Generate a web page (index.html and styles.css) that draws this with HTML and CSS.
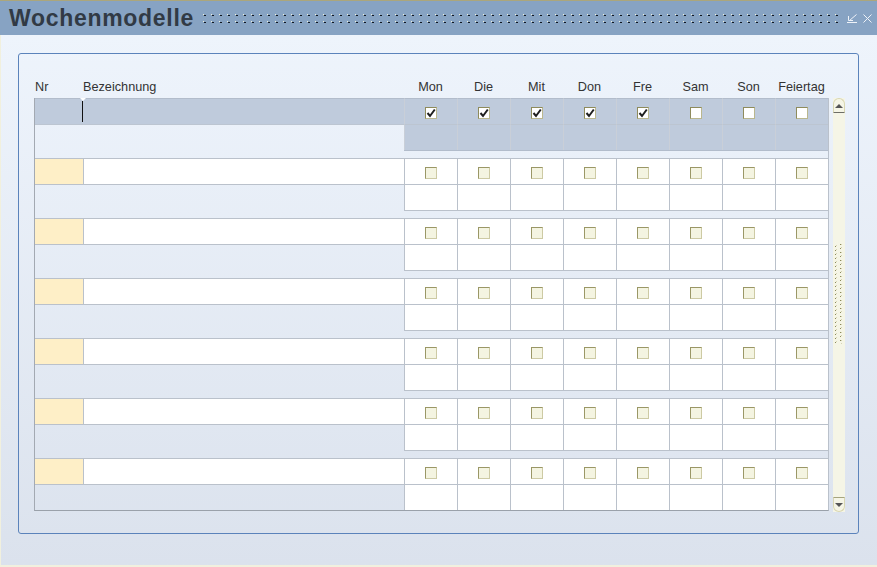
FILE: index.html
```html
<!DOCTYPE html>
<html lang="de">
    <head>
        <meta charset="UTF-8">
        <meta name="viewport" content="width=device-width, initial-scale=1.0">
        <title>Wochenmodelle</title>
        <link rel="stylesheet" href="styles.css">
    </head>
    <body>
        <div class="window">
            <!-- Titelleiste -->
            <div class="titlebar">
                <h1 class="title">Wochenmodelle</h1>
                <svg class="grip" height="9">
                    <defs>
                        <pattern id="dots" width="8" height="7" patternUnits="userSpaceOnUse">
                            <rect x="0" y="0" width="1" height="1" fill="#f0f0d8"/>
                            <rect x="1" y="1" width="2" height="1" fill="#10161f"/>
                        </pattern>
                    </defs>
                    <rect width="100%" height="9" fill="url(#dots)"/>
                </svg>
                <div class="win-icons">
                    <svg width="10" height="9"><path d="M9.5 0.5 L2.5 6.5 M1.5 2 V6.5 H6 M0 8.5 H10" stroke="#eef2f8" fill="none"/></svg>
                    <svg width="9" height="9"><path d="M0.5 0.5 L8.5 8.5 M8.5 0.5 L0.5 8.5" stroke="#eef2f8" fill="none"/></svg>
                </div>
            </div>

            <div class="main">
                <div class="panel">
                    <div class="head">
                        <div>Nr</div>
                        <div>Bezeichnung</div>
                        <div class="c">Mon</div>
                        <div class="c">Die</div>
                        <div class="c">Mit</div>
                        <div class="c">Don</div>
                        <div class="c">Fre</div>
                        <div class="c">Sam</div>
                        <div class="c">Son</div>
                        <div class="c">Feiertag</div>
                    </div>

                    <div class="body">
                        <div class="table">
                            <!-- ausgewählter Datensatz -->
                            <div class="rec sel first">
                                <div class="nr"></div>
                                <div class="name"></div>
                                <div class="day"><i class="cb"><svg width="10" height="10"><path d="M1.5 5 L4 8 L8.8 1.5" stroke="#1e1e1e" stroke-width="2" fill="none"/></svg></i></div>
                                <div class="day"><i class="cb"><svg width="10" height="10"><path d="M1.5 5 L4 8 L8.8 1.5" stroke="#1e1e1e" stroke-width="2" fill="none"/></svg></i></div>
                                <div class="day"><i class="cb"><svg width="10" height="10"><path d="M1.5 5 L4 8 L8.8 1.5" stroke="#1e1e1e" stroke-width="2" fill="none"/></svg></i></div>
                                <div class="day"><i class="cb"><svg width="10" height="10"><path d="M1.5 5 L4 8 L8.8 1.5" stroke="#1e1e1e" stroke-width="2" fill="none"/></svg></i></div>
                                <div class="day"><i class="cb"><svg width="10" height="10"><path d="M1.5 5 L4 8 L8.8 1.5" stroke="#1e1e1e" stroke-width="2" fill="none"/></svg></i></div>
                                <div class="day"><i class="cb"></i></div>
                                <div class="day"><i class="cb"></i></div>
                                <div class="day"><i class="cb"></i></div>
                                <div class="pad"></div>
                                <div class="day"></div><div class="day"></div><div class="day"></div><div class="day"></div>
                                <div class="day"></div><div class="day"></div><div class="day"></div><div class="day"></div>
                                <div class="strip"></div>
                            </div>

                            <div class="rec">
                                <div class="nr"></div>
                                <div class="name"></div>
                                <div class="day"><i class="cb"></i></div><div class="day"><i class="cb"></i></div>
                                <div class="day"><i class="cb"></i></div><div class="day"><i class="cb"></i></div>
                                <div class="day"><i class="cb"></i></div><div class="day"><i class="cb"></i></div>
                                <div class="day"><i class="cb"></i></div><div class="day"><i class="cb"></i></div>
                                <div class="pad"></div>
                                <div class="day"></div><div class="day"></div><div class="day"></div><div class="day"></div>
                                <div class="day"></div><div class="day"></div><div class="day"></div><div class="day"></div>
                                <div class="strip"></div>
                            </div>

                            <div class="rec">
                                <div class="nr"></div>
                                <div class="name"></div>
                                <div class="day"><i class="cb"></i></div><div class="day"><i class="cb"></i></div>
                                <div class="day"><i class="cb"></i></div><div class="day"><i class="cb"></i></div>
                                <div class="day"><i class="cb"></i></div><div class="day"><i class="cb"></i></div>
                                <div class="day"><i class="cb"></i></div><div class="day"><i class="cb"></i></div>
                                <div class="pad"></div>
                                <div class="day"></div><div class="day"></div><div class="day"></div><div class="day"></div>
                                <div class="day"></div><div class="day"></div><div class="day"></div><div class="day"></div>
                                <div class="strip"></div>
                            </div>

                            <div class="rec">
                                <div class="nr"></div>
                                <div class="name"></div>
                                <div class="day"><i class="cb"></i></div><div class="day"><i class="cb"></i></div>
                                <div class="day"><i class="cb"></i></div><div class="day"><i class="cb"></i></div>
                                <div class="day"><i class="cb"></i></div><div class="day"><i class="cb"></i></div>
                                <div class="day"><i class="cb"></i></div><div class="day"><i class="cb"></i></div>
                                <div class="pad"></div>
                                <div class="day"></div><div class="day"></div><div class="day"></div><div class="day"></div>
                                <div class="day"></div><div class="day"></div><div class="day"></div><div class="day"></div>
                                <div class="strip"></div>
                            </div>

                            <div class="rec">
                                <div class="nr"></div>
                                <div class="name"></div>
                                <div class="day"><i class="cb"></i></div><div class="day"><i class="cb"></i></div>
                                <div class="day"><i class="cb"></i></div><div class="day"><i class="cb"></i></div>
                                <div class="day"><i class="cb"></i></div><div class="day"><i class="cb"></i></div>
                                <div class="day"><i class="cb"></i></div><div class="day"><i class="cb"></i></div>
                                <div class="pad"></div>
                                <div class="day"></div><div class="day"></div><div class="day"></div><div class="day"></div>
                                <div class="day"></div><div class="day"></div><div class="day"></div><div class="day"></div>
                                <div class="strip"></div>
                            </div>

                            <div class="rec">
                                <div class="nr"></div>
                                <div class="name"></div>
                                <div class="day"><i class="cb"></i></div><div class="day"><i class="cb"></i></div>
                                <div class="day"><i class="cb"></i></div><div class="day"><i class="cb"></i></div>
                                <div class="day"><i class="cb"></i></div><div class="day"><i class="cb"></i></div>
                                <div class="day"><i class="cb"></i></div><div class="day"><i class="cb"></i></div>
                                <div class="pad"></div>
                                <div class="day"></div><div class="day"></div><div class="day"></div><div class="day"></div>
                                <div class="day"></div><div class="day"></div><div class="day"></div><div class="day"></div>
                                <div class="strip"></div>
                            </div>

                            <!-- letzter Datensatz ohne Trennstreifen -->
                            <div class="rec last">
                                <div class="nr"></div>
                                <div class="name"></div>
                                <div class="day"><i class="cb"></i></div><div class="day"><i class="cb"></i></div>
                                <div class="day"><i class="cb"></i></div><div class="day"><i class="cb"></i></div>
                                <div class="day"><i class="cb"></i></div><div class="day"><i class="cb"></i></div>
                                <div class="day"><i class="cb"></i></div><div class="day"><i class="cb"></i></div>
                                <div class="pad"></div>
                                <div class="day"></div><div class="day"></div><div class="day"></div><div class="day"></div>
                                <div class="day"></div><div class="day"></div><div class="day"></div><div class="day"></div>
                            </div>
                        </div>

                        <!-- Bildlaufleiste -->
                        <div class="scroll">
                            <div class="btn up"><span class="arrow"></span></div>
                            <div class="track">
                                <svg class="thumb" width="8" height="100">
                                    <defs>
                                        <pattern id="grip" width="8" height="8" patternUnits="userSpaceOnUse">
                                            <rect x="5" y="0" width="1" height="1" fill="#8c8a5c"/>
                                            <rect x="6" y="0" width="1" height="1" fill="#d6d4b4"/>
                                            <rect x="0" y="2" width="1" height="1" fill="#8c8a5c"/>
                                            <rect x="1" y="1" width="1" height="1" fill="#d6d4b4"/>
                                            <rect x="5" y="4" width="1" height="1" fill="#8c8a5c"/>
                                            <rect x="6" y="3" width="1" height="1" fill="#d6d4b4"/>
                                            <rect x="0" y="6" width="1" height="1" fill="#8c8a5c"/>
                                            <rect x="1" y="5" width="1" height="1" fill="#d6d4b4"/>
                                        </pattern>
                                    </defs>
                                    <rect width="8" height="100" fill="url(#grip)"/>
                                </svg>
                            </div>
                            <div class="btn down"><span class="arrow"></span></div>
                        </div>
                    </div>
                </div>
            </div>
        </div>
    </body>
</html>
```

FILE: styles.css
```css
* {
    margin: 0;
    padding: 0;
    box-sizing: border-box;
}

body {
    width: 877px;
    height: 567px;
    overflow: hidden;
    font-family: "Liberation Sans", Arial, sans-serif;
    color: #2f3136;
}

.window {
    display: flex;
    flex-direction: column;
    height: 567px;
}

/* Titelleiste */
.titlebar {
    height: 35px;
    display: flex;
    align-items: center;
    padding-left: 9px;
    background-color: #87a3c3;
    border-top: 1px solid #aba67c;
}

.title {
    font: 700 23px "Liberation Sans", Arial, sans-serif;
    letter-spacing: 0.7px;
    color: #313a45;
    line-height: 34px;
}

.grip {
    flex: 1;
    margin-left: 9px;
}

.win-icons {
    display: flex;
    align-items: center;
    gap: 6px;
    margin-left: 9px;
    padding-right: 5px;
}

.win-icons svg {
    display: block;
}

/* Arbeitsbereich */
.main {
    flex: 1;
    padding: 18px 0 0 17px;
    border-left: 1px solid #f1f0de;
    border-bottom: 2px solid #f1f0de;
    background-image: linear-gradient(180deg, #eef4fc 0%, #dbe2ed 100%);
}

.panel {
    width: 841px;
    height: 481px;
    padding: 26px 0 0 15px;
    border: 1px solid #5b83bb;
    border-radius: 3px;
}

.head,
.rec {
    display: grid;
    grid-template-columns: 48px 321px repeat(8, 53px);
}

.head {
    padding-left: 1px;
    padding-bottom: 3px;
    font-size: 12.7px;
    line-height: 15px;
    color: #333;
}

.head .c {
    text-align: center;
}

.body {
    display: flex;
    align-items: flex-start;
}

/* Tabelle */
.table {
    width: 795px;
    border-left: 1px solid #a3a9b2;
    border-right: 1px solid #bac1cb;
    border-bottom: 1px solid #9aa1aa;
}

.rec {
    grid-template-rows: 26px 26px 8px;
}

.rec.last {
    grid-template-rows: 26px 26px;
}

.nr,
.name,
.day,
.pad,
.strip {
    border-top: 1px solid #bac1cb;
}

.nr {
    background-color: #feefc7;
}

.name {
    background-color: #fff;
    border-left: 1px solid #bac1cb;
}

.day {
    display: flex;
    align-items: center;
    justify-content: center;
    padding-top: 2px;
    background-color: #fff;
    border-left: 1px solid #bac1cb;
}

.pad {
    grid-column: 1 / 3;
    grid-row: 2 / -1;
}

.strip {
    grid-column: 3 / 11;
    grid-row: 3;
}

/* ausgewählte Zeile */
.first > div {
    border-top-color: #b2bccb;
}

.sel .nr,
.sel .name,
.sel .day {
    background-color: #bfcbdc;
}

.sel .name {
    position: relative;
    border-left-color: #bfcbdc;
}

.sel .day {
    border-left-color: #c9cfd8;
}

.sel .pad,
.sel .day:nth-child(n+12) {
    border-top-color: #bcc5d1;
}

/* Schreibmarke */
.sel .name::before {
    content: "";
    position: absolute;
    left: -2px;
    top: 2px;
    width: 1px;
    height: 21px;
    background-color: #111;
}

.sel .name::after {
    content: "";
    position: absolute;
    left: -4px;
    top: -1px;
    border-left: 3px solid transparent;
    border-right: 3px solid transparent;
    border-top: 3px solid #fff;
}

/* Kontrollkästchen */
.cb {
    display: block;
    width: 12px;
    height: 12px;
    border: 1px solid;
    border-color: #9a9766 #cdcaa4 #cdcaa4 #9a9766;
    background-color: #f4f4e1;
}

.sel .cb {
    background-color: #fff;
    border-color: #8e8b5c #bab78e #bab78e #8e8b5c;
}

.cb svg {
    display: block;
}

/* Bildlaufleiste */
.scroll {
    width: 12px;
    height: 414px;
    margin-left: 4px;
    display: flex;
    flex-direction: column;
    background-color: #f5f5e6;
}

.btn {
    height: 15px;
    display: flex;
    align-items: center;
    justify-content: center;
    border: 1px solid #d9d7b2;
}

.btn.up {
    border-radius: 6px 6px 0 0;
    border-bottom: 1px solid #6d6d66;
}

.btn.down {
    border-radius: 0 0 6px 6px;
    border-top: 1px solid #a6a47e;
}

.arrow {
    border-left: 4px solid transparent;
    border-right: 4px solid transparent;
}

.up .arrow {
    border-bottom: 4px solid #555;
}

.down .arrow {
    border-top: 4px solid #555;
}

.track {
    flex: 1;
    display: flex;
    justify-content: center;
}

.thumb {
    margin-top: 131px;
}
```
